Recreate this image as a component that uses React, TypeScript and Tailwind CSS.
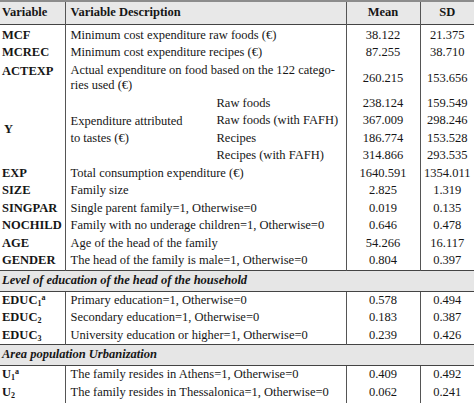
import React from 'react';

type Row = { v: React.ReactNode; d: React.ReactNode; mean: string; sd: string; h?: string };

const top: Row[] = [
  { v: 'MCF', d: 'Minimum cost expenditure raw foods (€)', mean: '38.122', sd: '21.375', h: 'h-[19px] pt-[2px]' },
  { v: 'MCREC', d: 'Minimum cost expenditure recipes (€)', mean: '87.255', sd: '38.710' },
];

const family: Row[] = [
  { v: 'EXP', d: 'Total consumption expenditure (€)', mean: '1640.591', sd: '1354.011' },
  { v: 'SIZE', d: 'Family size', mean: '2.825', sd: '1.319' },
  { v: 'SINGPAR', d: 'Single parent family=1, Otherwise=0', mean: '0.019', sd: '0.135' },
  { v: 'NOCHILD', d: 'Family with no underage children=1, Otherwise=0', mean: '0.646', sd: '0.478' },
  { v: 'AGE', d: 'Age of the head of the family', mean: '54.266', sd: '16.117' },
  { v: 'GENDER', d: 'The head of the family is male=1, Otherwise=0', mean: '0.804', sd: '0.397' },
];

// subscript index, optional footnote mark
const sub = (n: string, a?: boolean) => (
  <>
    <sub className="text-[8px]">{n}</sub>
    {a ? <sup className="text-[8px]">a</sup> : null}
  </>
);

const education: Row[] = [
  { v: <>EDUC{sub('1', true)}</>, d: 'Primary education=1, Otherwise=0', mean: '0.578', sd: '0.494' },
  { v: <>EDUC{sub('2')}</>, d: 'Secondary education=1, Otherwise=0', mean: '0.183', sd: '0.387' },
  { v: <>EDUC{sub('3')}</>, d: 'University education or higher=1, Otherwise=0', mean: '0.239', sd: '0.426' },
];

const area: Row[] = [
  { v: <>U{sub('1', true)}</>, d: 'The family resides in Athens=1, Otherwise=0', mean: '0.409', sd: '0.492' },
  { v: <>U{sub('2')}</>, d: 'The family resides in Thessalonica=1, Otherwise=0', mean: '0.062', sd: '0.241' },
];

const tastes = [
  ['Raw foods', '238.124', '159.549'],
  ['Raw foods (with FAFH)', '367.009', '298.246'],
  ['Recipes', '186.774', '153.528'],
  ['Recipes (with FAFH)', '314.866', '293.535'],
];

function DataRow({ r }: { r: Row }) {
  const h = r.h ?? 'h-[17.5px]';
  return (
    <tr>
      <td className={`${h} p-0 pl-[2px] align-middle font-bold whitespace-nowrap`}>{r.v}</td>
      <td className={`${h} border-l border-[#555] p-0 pl-[5px] align-middle whitespace-nowrap`}>{r.d}</td>
      <td className={`${h} border-l border-[#555] p-0 text-center align-middle`}>{r.mean}</td>
      <td className={`${h} border-l border-[#555] p-0 text-center align-middle`}>{r.sd}</td>
    </tr>
  );
}

function Section({ label }: { label: string }) {
  return (
    <tr>
      <td colSpan={4} className="h-[21px] border-y border-[#444] bg-[#e6e6e6] p-0 pl-[2px] align-middle font-bold italic">
        {label}
      </td>
    </tr>
  );
}

export default function App() {
  return (
    <div className="h-[403px] w-[474px] overflow-hidden bg-white font-['Liberation_Serif',serif] text-[12.5px] leading-[17.5px] text-[#161616]">
      <table className="w-[474px] table-fixed border-collapse">
        <colgroup>
          <col className="w-[65px]" />
          <col className="w-[281px]" />
          <col className="w-[74px]" />
          <col className="w-[54px]" />
        </colgroup>
        <thead>
          <tr className="h-[23px] border-t-2 border-b border-t-[#8c8c8c] border-b-[#444] bg-[#e8e8e8] font-bold">
            <th className="p-0 pl-[2px] text-left align-middle">Variable</th>
            <th className="border-l border-[#555] p-0 pl-[5px] text-left align-middle">Variable Description</th>
            <th className="border-l border-[#555] p-0 text-center align-middle">Mean</th>
            <th className="border-l border-[#555] p-0 text-center align-middle">SD</th>
          </tr>
        </thead>
        <tbody>
          {top.map((r, i) => (
            <DataRow key={i} r={r} />
          ))}
          <tr>
            <td className="p-0 pl-[2px] align-top font-bold">
              <div className="h-[33px] pt-[1px]">ACTEXP</div>
            </td>
            <td className="border-l border-[#555] p-0 pl-[5px] align-top">
              <div className="flex h-[33px] flex-col justify-center leading-[15px]">
                <span>Actual expenditure on food based on the 122 catego-</span>
                <span>ries used (€)</span>
              </div>
            </td>
            <td className="border-l border-[#555] p-0 align-top">
              <div className="flex h-[33px] items-center justify-center pt-[1px]">260.215</div>
            </td>
            <td className="border-l border-[#555] p-0 align-top">
              <div className="flex h-[33px] items-center justify-center pt-[1px]">153.656</div>
            </td>
          </tr>
          <tr>
            <td className="p-0 pl-[4px] align-middle font-bold">Y</td>
            <td className="border-l border-[#555] p-0 pl-[5px] align-middle">
              <div className="flex items-center">
                <div className="w-[146px] leading-[17px]">
                  Expenditure attributed
                  <br />
                  to tastes (€)
                </div>
                <div className="flex flex-col whitespace-nowrap">
                  {tastes.map((t) => (
                    <span key={t[0]} className="h-[17.5px]">
                      {t[0]}
                    </span>
                  ))}
                </div>
              </div>
            </td>
            <td className="border-l border-[#555] p-0 text-center align-middle">
              <div className="flex flex-col">
                {tastes.map((t) => (
                  <span key={t[0]} className="h-[17.5px]">
                    {t[1]}
                  </span>
                ))}
              </div>
            </td>
            <td className="border-l border-[#555] p-0 text-center align-middle">
              <div className="flex flex-col">
                {tastes.map((t) => (
                  <span key={t[0]} className="h-[17.5px]">
                    {t[2]}
                  </span>
                ))}
              </div>
            </td>
          </tr>
          {family.map((r, i) => (
            <DataRow key={i} r={r} />
          ))}
          <Section label="Level of education of the head of the household" />
          {education.map((r, i) => (
            <DataRow key={i} r={r} />
          ))}
          <Section label="Area population Urbanization" />
          {area.map((r, i) => (
            <DataRow key={i} r={r} />
          ))}
          <tr>
            <td className="h-[20px] p-0" />
            <td className="border-l border-[#555] p-0" />
            <td className="border-l border-[#555] p-0" />
            <td className="border-l border-[#555] p-0" />
          </tr>
        </tbody>
      </table>
    </div>
  );
}
